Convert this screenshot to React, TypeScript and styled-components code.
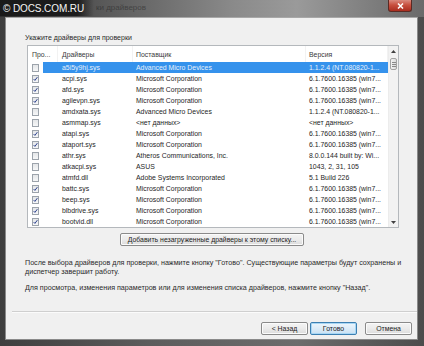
import React from "react";
import styled, { createGlobalStyle } from "styled-components";

const Global = createGlobalStyle`
  html, body { margin: 0; padding: 0; background: #4a4a4a; }
  body { font-family: "Liberation Sans", Arial, sans-serif; }
  * { box-sizing: border-box; }
`;

const Window = styled.div`
  position: relative;
  width: 424px;
  height: 346px;
  display: flex;
  flex-direction: column;
  overflow: hidden;
  background: linear-gradient(90deg, #3e3e3e 0%, #5c5c5c 35%, #6c6c6c 70%, #4c4c4c 100%);
`;

const TitleBar = styled.div`
  height: 17px;
  flex: none;
  display: flex;
  align-items: flex-start;
  background: linear-gradient(90deg, #2e2e2e 0%, #5a5a5a 25%, #8a8a8a 55%, #9a9a9a 70%, #6a6a6a 100%);
`;

const TitleText = styled.div`
  margin: 3px 0 0 96px;
  font-size: 8px;
  line-height: 10px;
  color: rgba(30, 30, 30, 0.5);
`;

const CloseButton = styled.div`
  margin: 0 12px 0 auto;
  width: 24px;
  height: 12px;
  border-radius: 0 0 3px 3px;
  border: 1px solid #5a2a24;
  border-top: none;
  background: linear-gradient(180deg, #d98a7e 0%, #c8503f 45%, #a92d1f 100%);
  display: flex;
  align-items: center;
  justify-content: center;
`;

const Watermark = styled.div`
  position: absolute;
  left: 0;
  top: 0;
  width: 94px;
  height: 16px;
  padding-left: 3px;
  display: flex;
  align-items: center;
  gap: 2px;
  color: #f4f4f4;
  font-size: 10px;
  letter-spacing: -0.1px;
  background: linear-gradient(90deg, rgba(24, 24, 24, 0.92) 82%, rgba(24, 24, 24, 0) 100%);
`;

const Frame = styled.div`
  flex: 1;
  display: flex;
  padding: 0 6px 6px 5px;
`;

const Panel = styled.div`
  flex: 1;
  display: flex;
  flex-direction: column;
  background: #f0f0f0;
  border: 1px solid #8a8a8a;
  border-top-color: #a8a8a8;
  color: #222;
  font-size: 6.9px;
`;

const Heading = styled.div`
  margin: 15px 0 0 19px;
  line-height: 9px;
  color: #2a2a2a;
  font-size: 7px;
`;

const ListBox = styled.div`
  margin: 3px 0 0 21px;
  width: 372px;
  height: 183px;
  border: 1px solid #b4b8bc;
  background: #fff;
  display: flex;
`;

const ListMain = styled.div`
  flex: 1;
  display: flex;
  flex-direction: column;
`;

const HeaderRow = styled.div`
  height: 16px;
  display: grid;
  grid-template-columns: 30px 75px 173px 1fr;
  align-items: center;
  color: #3a3a3a;
`;

const HeaderCell = styled.div<{ $pad: number }>`
  padding-left: ${(p) => p.$pad}px;
  height: 100%;
  display: flex;
  align-items: center;
  border-right: 1px solid #f2f2f2;
  white-space: nowrap;
  overflow: hidden;
`;

const Row = styled.div`
  height: 11px;
  display: grid;
  grid-template-columns: 15px 90px 173px 1fr;
  align-items: stretch;
  line-height: 11px;
`;

const CheckCell = styled.div`
  display: flex;
  align-items: center;
  padding-left: 4px;
`;

const Cell = styled.div<{ $pad: number; $sel: boolean }>`
  padding-left: ${(p) => p.$pad}px;
  white-space: nowrap;
  overflow: hidden;
  background: ${(p) => (p.$sel ? "#3592ec" : "transparent")};
  color: ${(p) => (p.$sel ? "#e6f0fb" : "#262626")};
`;

const Box = styled.span<{ $on: boolean }>`
  width: 7px;
  height: 8px;
  border: 1px solid #9ca3ab;
  background: linear-gradient(180deg, #e4e6e8 0%, #f6f7f8 100%);
  display: flex;
  align-items: center;
  justify-content: center;
`;

const ScrollBar = styled.div`
  width: 10px;
  display: flex;
  flex-direction: column;
  background: #f2f2f2;
  border-left: 1px solid #ececec;
`;

const ScrollButton = styled.div`
  height: 10px;
  display: flex;
  align-items: center;
  justify-content: center;
`;

const Thumb = styled.div`
  margin: 2px 1px 0;
  height: 12px;
  border: 1px solid #a3a3a3;
  border-radius: 2px;
  background: linear-gradient(90deg, #f3f3f3, #dcdcdc);
  display: flex;
  flex-direction: column;
  align-items: center;
  justify-content: center;
  gap: 1px;
`;

const Grip = styled.span`
  width: 4px;
  height: 1px;
  background: #8a8a8a;
`;

const Track = styled.div`
  flex: 1;
`;

const Button = styled.div<{ $focus?: boolean }>`
  height: 13px;
  display: flex;
  align-items: center;
  justify-content: center;
  border: 1px solid ${(p) => (p.$focus ? "#3c7fb1" : "#8a8a8a")};
  border-radius: 2px;
  background: ${(p) =>
    p.$focus
      ? "linear-gradient(180deg, #eef6fc 0%, #dcecf8 50%, #c9e1f3 100%)"
      : "linear-gradient(180deg, #f4f4f4 0%, #ebebeb 50%, #dcdcdc 100%)"};
  box-shadow: inset 0 0 0 1px ${(p) => (p.$focus ? "#a8d7f5" : "#fbfbfb")};
  color: #222;
  white-space: nowrap;
`;

const AddButton = styled(Button)`
  margin: 5px 0 0 114px;
  width: 184px;
`;

const Para = styled.div<{ $top: number }>`
  margin: ${(p) => p.$top}px 0 0 19px;
  line-height: 8.5px;
  font-size: 7.15px;
  color: #2a2a2a;
`;

const Separator = styled.div`
  margin: 19px 0 0 6px;
  height: 2px;
  border-top: 1px solid #cfcfcf;
  border-bottom: 1px solid #fbfbfb;
`;

const ButtonRow = styled.div`
  margin-top: 9px;
  padding-right: 5px;
  display: flex;
  justify-content: flex-end;
`;

const NavButton = styled(Button)<{ $gap: number }>`
  width: 47px;
  margin-left: ${(p) => p.$gap}px;
`;

type Driver = { name: string; vendor: string; version: string; on: boolean };

const MS = "Microsoft Corporation";
const W7 = "6.1.7600.16385 (win7...";

const drivers: Driver[] = [
  { name: "a5i5y9hj.sys", vendor: "Advanced Micro Devices", version: "1.1.2.4 (NT.080820-1...", on: false },
  { name: "acpi.sys", vendor: MS, version: W7, on: true },
  { name: "afd.sys", vendor: MS, version: W7, on: true },
  { name: "agilevpn.sys", vendor: MS, version: W7, on: true },
  { name: "amdxata.sys", vendor: "Advanced Micro Devices", version: "1.1.2.4 (NT.080820-1...", on: false },
  { name: "asmmap.sys", vendor: "<нет данных>", version: "<нет данных>", on: false },
  { name: "atapi.sys", vendor: MS, version: W7, on: true },
  { name: "ataport.sys", vendor: MS, version: W7, on: true },
  { name: "athr.sys", vendor: "Atheros Communications, Inc.", version: "8.0.0.144 built by: Wi...", on: false },
  { name: "atkacpi.sys", vendor: "ASUS", version: "1043, 2, 31, 105", on: false },
  { name: "atmfd.dll", vendor: "Adobe Systems Incorporated", version: "5.1 Build 226", on: false },
  { name: "battc.sys", vendor: MS, version: W7, on: true },
  { name: "beep.sys", vendor: MS, version: W7, on: true },
  { name: "blbdrive.sys", vendor: MS, version: W7, on: true },
  { name: "bootvid.dll", vendor: MS, version: W7, on: true },
];

const Check = () => (
  <svg width="6" height="6" viewBox="0 0 6 6">
    <path d="M0.8 3.1 L2.3 4.7 L5.2 0.8" fill="none" stroke="#2b3f8c" strokeWidth="1.2" />
  </svg>
);

const Arrow = ({ down }: { down?: boolean }) => (
  <svg width="5" height="3" viewBox="0 0 5 3">
    <path d={down ? "M0 0 L5 0 L2.5 3 Z" : "M0 3 L5 3 L2.5 0 Z"} fill="#404040" />
  </svg>
);

export default function App() {
  return (
    <>
      <Global />
      <Window>
        <TitleBar>
          <TitleText>ки драйверов</TitleText>
          <CloseButton>
            <svg width="7" height="6" viewBox="0 0 7 6">
              <path d="M1 0.5 L6 5.5 M6 0.5 L1 5.5" stroke="#fff" strokeWidth="1.5" />
            </svg>
          </CloseButton>
        </TitleBar>
        <Watermark>© DOCS.COM.RU</Watermark>
        <Frame>
          <Panel>
            <Heading>Укажите драйверы для проверки</Heading>
            <ListBox>
              <ListMain>
                <HeaderRow>
                  <HeaderCell $pad={4}>Про...</HeaderCell>
                  <HeaderCell $pad={4}>Драйверы</HeaderCell>
                  <HeaderCell $pad={3}>Поставщик</HeaderCell>
                  <HeaderCell $pad={3}>Версия</HeaderCell>
                </HeaderRow>
                {drivers.map((d, i) => {
                  const sel = i === 0;
                  return (
                    <Row key={d.name}>
                      <CheckCell>
                        <Box $on={d.on}>{d.on && <Check />}</Box>
                      </CheckCell>
                      <Cell $pad={19} $sel={sel}>{d.name}</Cell>
                      <Cell $pad={3} $sel={sel}>{d.vendor}</Cell>
                      <Cell $pad={3} $sel={sel}>{d.version}</Cell>
                    </Row>
                  );
                })}
              </ListMain>
              <ScrollBar>
                <ScrollButton>
                  <Arrow />
                </ScrollButton>
                <Thumb>
                  <Grip />
                  <Grip />
                  <Grip />
                </Thumb>
                <Track />
                <ScrollButton>
                  <Arrow down />
                </ScrollButton>
              </ScrollBar>
            </ListBox>
            <AddButton>Добавить незагруженные драйверы к этому списку...</AddButton>
            <Para $top={13}>
              После выбора драйверов для проверки, нажмите кнопку "Готово". Существующие параметры будут сохранены и
              <br />
              диспетчер завершит работу.
            </Para>
            <Para $top={7.5}>
              Для просмотра, изменения параметров или для изменения списка драйверов, нажмите кнопку "Назад".
            </Para>
            <Separator />
            <ButtonRow>
              <NavButton $gap={0}>&lt; Назад</NavButton>
              <NavButton $gap={2} $focus>
                Готово
              </NavButton>
              <NavButton $gap={8}>Отмена</NavButton>
            </ButtonRow>
          </Panel>
        </Frame>
      </Window>
    </>
  );
}
